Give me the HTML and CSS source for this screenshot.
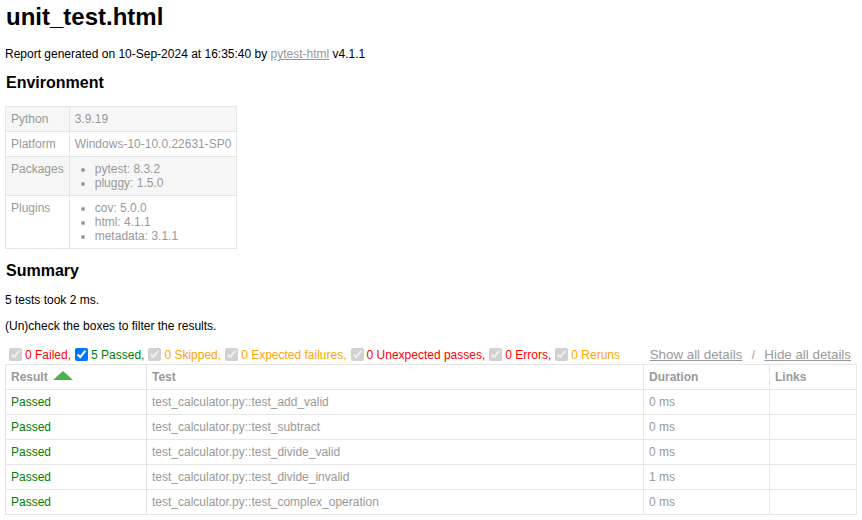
FILE: index.html
```html
<!DOCTYPE html>
<html>
<head>
<meta charset="utf-8">
<title>unit_test.html</title>
<link rel="stylesheet" href="styles.css">
</head>
<body>
<h1 class="title">unit_test.html</h1>
<p class="meta">Report generated on 10-Sep-2024 at 16:35:40 by <a class="link" href="#">pytest-html</a> v4.1.1</p>
<h2 class="section">Environment</h2>
<table class="env">
  <tr><td>Python</td><td>3.9.19</td></tr>
  <tr><td>Platform</td><td>Windows-10-10.0.22631-SP0</td></tr>
  <tr><td>Packages</td><td><ul class="env-list"><li>pytest: 8.3.2</li><li>pluggy: 1.5.0</li></ul></td></tr>
  <tr><td>Plugins</td><td><ul class="env-list"><li>cov: 5.0.0</li><li>html: 4.1.1</li><li>metadata: 3.1.1</li></ul></td></tr>
</table>
<h2 class="section">Summary</h2>
<p class="meta">5 tests took 2 ms.</p>
<p class="meta">(Un)check the boxes to filter the results.</p>
<div class="controls">
  <div class="filters">
    <input type="checkbox" class="filter" checked disabled><span class="failed">0 Failed,</span>
    <input type="checkbox" class="filter" checked><span class="passed">5 Passed,</span>
    <input type="checkbox" class="filter" checked disabled><span class="skipped">0 Skipped,</span>
    <input type="checkbox" class="filter" checked disabled><span class="skipped">0 Expected failures,</span>
    <input type="checkbox" class="filter" checked disabled><span class="failed">0 Unexpected passes,</span>
    <input type="checkbox" class="filter" checked disabled><span class="failed">0 Errors,</span>
    <input type="checkbox" class="filter" checked disabled><span class="skipped">0 Reruns</span>
  </div>
  <div class="collapse">
    <button class="toggle">Show all details</button><span class="sep">&nbsp;/&nbsp;</span><button class="toggle">Hide all details</button>
  </div>
</div>
<table class="results">
  <thead>
    <tr>
      <th class="col-result">Result<span class="asc"></span></th>
      <th class="col-test">Test</th>
      <th class="col-duration">Duration</th>
      <th class="col-links">Links</th>
    </tr>
  </thead>
  <tbody>
    <tr><td class="passed">Passed</td><td>test_calculator.py::test_add_valid</td><td>0 ms</td><td></td></tr>
    <tr><td class="passed">Passed</td><td>test_calculator.py::test_subtract</td><td>0 ms</td><td></td></tr>
    <tr><td class="passed">Passed</td><td>test_calculator.py::test_divide_valid</td><td>0 ms</td><td></td></tr>
    <tr><td class="passed">Passed</td><td>test_calculator.py::test_divide_invalid</td><td>1 ms</td><td></td></tr>
    <tr><td class="passed">Passed</td><td>test_calculator.py::test_complex_operation</td><td>0 ms</td><td></td></tr>
  </tbody>
</table>
</body>
</html>
```
FILE: styles.css
```css
body {
  margin: 0 5px;
  font-family: Helvetica, Arial, "Liberation Sans", sans-serif;
  font-size: 12px;
  color: #999;
  background: #fff;
}
.title {
  font-size: 24px;
  color: #000;
  margin: 3px 0 16px 1px;
}
.meta {
  color: #000;
  margin: 12px 0;
}
.link {
  color: #999;
}
.section {
  font-size: 16px;
  color: #000;
  margin: 13.28px 0;
  padding-left: 1px;
}
.env {
  border-collapse: collapse;
}
.env td {
  padding: 5px;
  border: 1px solid #e6e6e6;
  vertical-align: top;
}
.env tr:nth-child(odd) {
  background-color: #f6f6f6;
}
.env-list {
  margin: 0;
  padding: 0 20px;
}
.controls {
  display: flex;
  justify-content: space-between;
}
.filters, .collapse {
  display: flex;
  align-items: center;
}
.filter {
  margin: 3px 3px 3px 4px;
  width: 13px;
  height: 13px;
}
.passed { color: green; }
.failed { color: red; }
.skipped { color: orange; }
.toggle {
  color: #999;
  border: none;
  background: none;
  text-decoration: underline;
  font-family: Arial, "Liberation Sans", sans-serif;
  font-size: 13.333px;
  padding: 1px 6px;
}
.sep { color: #999; }
.results {
  border-collapse: collapse;
  border: 1px solid #e6e6e6;
  width: 100%;
  table-layout: fixed;
  font-size: 12px;
  color: #999;
}
.results th, .results td {
  padding: 5px;
  border: 1px solid #e6e6e6;
  text-align: left;
  height: 14px;
}
.results th { font-weight: bold; }
.results td.passed { color: green; }
.col-result { width: 130px; }
.col-test { width: 486px; }
.col-duration { width: 115px; }
.asc {
  display: inline-block;
  width: 0;
  height: 0;
  margin-left: 5px;
  border-left: 10px solid transparent;
  border-right: 10px solid transparent;
  border-bottom: 9px solid #4caf50;
  vertical-align: 1px;
}
```
